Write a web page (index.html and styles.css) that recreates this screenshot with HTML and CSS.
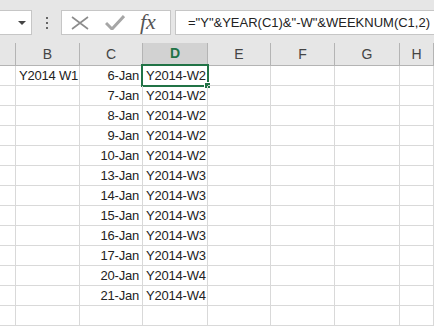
FILE: index.html
```html
<!DOCTYPE HTML>
<html>
<head>
    <meta charset='utf-8'>
    <link rel="stylesheet" href="styles.css">
</head>
<body>
    <!--公式列-->
    <div class="formulaBar">
        <div class="nameBox">
            <span class="dropArrow"></span>
        </div>
        <div class="grip"><span></span><span></span><span></span></div>
        <div class="fxButtons">
            <svg class="fxIcon" width="18" height="14" viewBox="0 0 18 14">
                <path d="M1 1 L17 13 M17 1 L1 13" stroke="#8c8c8c" stroke-width="1.6" fill="none"/>
            </svg>
            <svg class="fxIcon" width="20" height="15" viewBox="0 0 20 15">
                <path d="M1 8 L7 14 L19 1" stroke="#a6a6a6" stroke-width="3" fill="none"/>
            </svg>
            <span class="fxLabel">fx</span>
        </div>
        <div class="formulaInput">="Y"&amp;YEAR(C1)&amp;"-W"&amp;WEEKNUM(C1,2)</div>
    </div>

    <!--工作表-->
    <div class="sheet">
        <div class="colHead"></div>
        <div class="colHead">B</div>
        <div class="colHead">C</div>
        <div class="colHead active">D</div>
        <div class="colHead">E</div>
        <div class="colHead">F</div>
        <div class="colHead">G</div>
        <div class="colHead">H</div>

        <div class="cell"></div><div class="cell">Y2014 W1</div><div class="cell num">6-Jan</div><div class="cell selected">Y2014-W2</div><div class="cell"></div><div class="cell"></div><div class="cell"></div><div class="cell"></div>
        <div class="cell"></div><div class="cell"></div><div class="cell num">7-Jan</div><div class="cell">Y2014-W2</div><div class="cell"></div><div class="cell"></div><div class="cell"></div><div class="cell"></div>
        <div class="cell"></div><div class="cell"></div><div class="cell num">8-Jan</div><div class="cell">Y2014-W2</div><div class="cell"></div><div class="cell"></div><div class="cell"></div><div class="cell"></div>
        <div class="cell"></div><div class="cell"></div><div class="cell num">9-Jan</div><div class="cell">Y2014-W2</div><div class="cell"></div><div class="cell"></div><div class="cell"></div><div class="cell"></div>
        <div class="cell"></div><div class="cell"></div><div class="cell num">10-Jan</div><div class="cell">Y2014-W2</div><div class="cell"></div><div class="cell"></div><div class="cell"></div><div class="cell"></div>
        <div class="cell"></div><div class="cell"></div><div class="cell num">13-Jan</div><div class="cell">Y2014-W3</div><div class="cell"></div><div class="cell"></div><div class="cell"></div><div class="cell"></div>
        <div class="cell"></div><div class="cell"></div><div class="cell num">14-Jan</div><div class="cell">Y2014-W3</div><div class="cell"></div><div class="cell"></div><div class="cell"></div><div class="cell"></div>
        <div class="cell"></div><div class="cell"></div><div class="cell num">15-Jan</div><div class="cell">Y2014-W3</div><div class="cell"></div><div class="cell"></div><div class="cell"></div><div class="cell"></div>
        <div class="cell"></div><div class="cell"></div><div class="cell num">16-Jan</div><div class="cell">Y2014-W3</div><div class="cell"></div><div class="cell"></div><div class="cell"></div><div class="cell"></div>
        <div class="cell"></div><div class="cell"></div><div class="cell num">17-Jan</div><div class="cell">Y2014-W3</div><div class="cell"></div><div class="cell"></div><div class="cell"></div><div class="cell"></div>
        <div class="cell"></div><div class="cell"></div><div class="cell num">20-Jan</div><div class="cell">Y2014-W4</div><div class="cell"></div><div class="cell"></div><div class="cell"></div><div class="cell"></div>
        <div class="cell"></div><div class="cell"></div><div class="cell num">21-Jan</div><div class="cell">Y2014-W4</div><div class="cell"></div><div class="cell"></div><div class="cell"></div><div class="cell"></div>
        <div class="cell"></div><div class="cell"></div><div class="cell"></div><div class="cell"></div><div class="cell"></div><div class="cell"></div><div class="cell"></div><div class="cell"></div>
    </div>
</body>
</html>
```

FILE: styles.css
```css
body {
    margin: 0px;
    width: 434px;
    height: 326px;
    overflow: hidden;
    background-color: white;
    font-family: "Liberation Sans", Arial, sans-serif;
    color: #222;
}

.formulaBar {
    height: 43px;
    box-sizing: border-box;
    padding-top: 10px;
    display: flex;
    align-items: flex-start;
    background-color: #e6e6e6;
}

.nameBox {
    width: 33px;
    height: 25px;
    margin-left: -1px;
    box-sizing: border-box;
    border: 1px solid #c6c6c6;
    background-color: white;
    position: relative;
}

.dropArrow {
    position: absolute;
    left: 18px;
    top: 10px;
    border-left: 4px solid transparent;
    border-right: 4px solid transparent;
    border-top: 4px solid #444;
}

.grip {
    width: 29px;
    height: 25px;
    display: flex;
    flex-direction: column;
    align-items: center;
    justify-content: center;
    gap: 3px;
}

.grip span {
    width: 2px;
    height: 2px;
    background-color: #666;
}

.fxButtons {
    width: 110px;
    height: 25px;
    box-sizing: border-box;
    border: 1px solid #c6c6c6;
    background-color: white;
    display: flex;
    align-items: center;
    padding-left: 9px;
    gap: 16px;
}

.fxLabel {
    font-family: "Liberation Serif", serif;
    font-style: italic;
    font-size: 22px;
    color: #555;
    margin-left: -1px;
    margin-top: -2px;
}

.formulaInput {
    flex: 1 1 auto;
    height: 25px;
    margin-left: 4px;
    box-sizing: border-box;
    border: 1px solid #c6c6c6;
    border-right: none;
    background-color: white;
    padding-left: 12px;
    font-size: 13px;
    line-height: 23px;
    white-space: nowrap;
    overflow: hidden;
    color: #222;
}

.sheet {
    display: grid;
    grid-template-columns: 16px 64px 63px 65px 63px 64px 65px 1fr;
    grid-template-rows: 23px;
    grid-auto-rows: 20px;
}

.colHead {
    background-color: #e6e6e6;
    border-right: 1px solid #b4b4b4;
    border-bottom: 1px solid #b4b4b4;
    text-align: center;
    font-size: 14px;
    line-height: 22px;
    color: #444;
}

.colHead.active {
    background-color: #d2d2d2;
    color: #217346;
    font-weight: bold;
    border-bottom: 2px solid #217346;
    line-height: 21px;
}

.cell {
    border-right: 1px solid #d9d9d9;
    border-bottom: 1px solid #d9d9d9;
    font-size: 13px;
    line-height: 20px;
    padding: 0px 3px;
    white-space: nowrap;
    letter-spacing: -0.2px;
    position: relative;
}

.num {
    text-align: right;
}

.selected::before {
    content: "";
    position: absolute;
    left: -2px;
    top: -2px;
    right: -2px;
    bottom: -2px;
    border: 2px solid #217346;
}

.selected::after {
    content: "";
    position: absolute;
    right: -4px;
    bottom: -4px;
    width: 5px;
    height: 5px;
    background-color: #217346;
    border: 1px solid white;
}
```
